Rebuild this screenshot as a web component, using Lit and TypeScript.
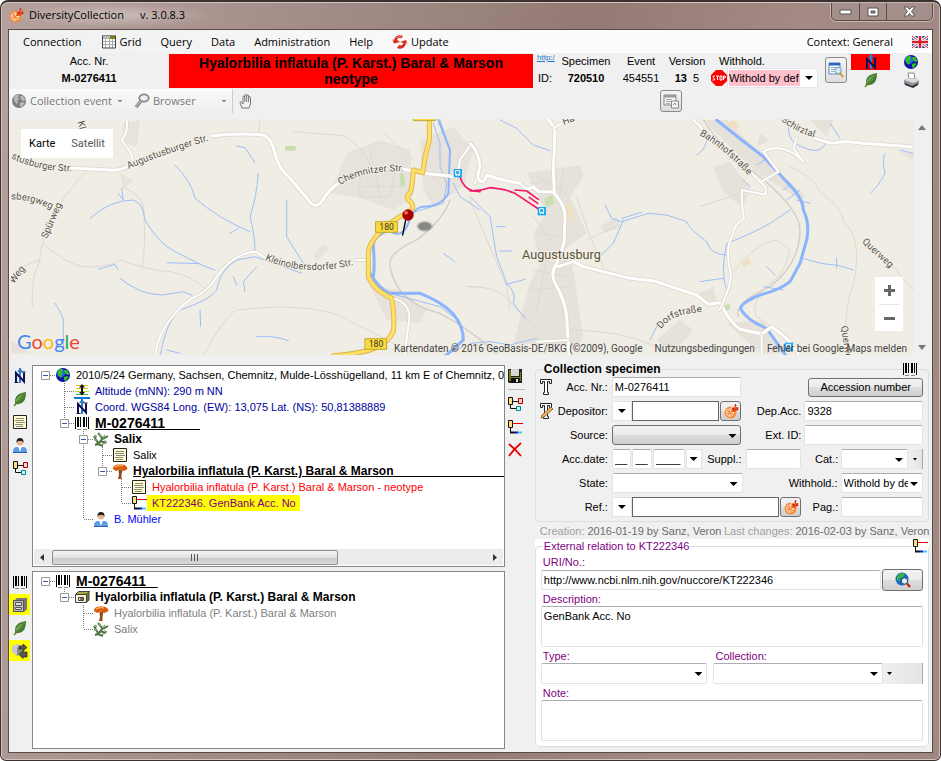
import { LitElement, html, svg, css, nothing, TemplateResult } from "lit";
import { customElement } from "lit/decorators.js";
import { classMap } from "lit/directives/class-map.js";

/* ---------- icons, all drawn on a 16 x 16 grid ---------- */
const shapes: Record<string, TemplateResult> = {
  app: svg`<path d="M8 3.500A6 6 0 1 0 13.500 9L8 9z" fill="#f58a3a"/><circle cx="7" cy="9.500" r="4.300" fill="#ffd9b8"/>
    <path d="M7 9.500L5.500 5.500M7 9.500L3.500 7M7 9.500L2.500 10.500M7 9.500L4.500 13M7 9.500L8.500 13.500M7 9.500L11 12" stroke="#f08030"/>
    <path d="M8 9L9 4l2 1 1.500-4L13 4l2.500 0-1 3-2 2z" fill="#ee5a1c"/><path d="M12 1.500l1 1.500M14 5l1 2M10 5l2 2" stroke="#c8201a" stroke-width="1.500"/>`,
  grid: svg`<path d="M1 1h14v13H1z" fill="#fff"/><path d="M1 1h8v4H1z" fill="#b8b8b8"/><path d="M9 1h6v4H9z" fill="#7d7d10"/>
    <path d="M1 7.500h14M1 10.500h14M4.500 5v9M8.500 5v9M11.500 5v9" stroke="#aaa"/><path d="M1.500 1v13h13V1" stroke="#444"/><path d="M1 1.500h14" stroke="#888"/>`,
  update: svg`<path d="M2 7C2 3 6 0 11 2L9 4.500C7 3.500 6 4 5 6L8 8 2 9.500 0 5z" fill="#d92a1c"/><path d="M14 8c0 5-4 8-9 6l2-3c2 1 4 0 4.500-2L8 8l6-2 2 5z" fill="#d92a1c"/><path d="M4 4.500C5 3 7 2.300 9 2.800" stroke="#ff9a8a" fill="none"/>`,
  flag: svg`<path d="M0 2h16v12H0z" fill="#1c3f94"/><path d="M0 2l16 12M16 2L0 14" stroke="#fff" stroke-width="3"/><path d="M0 2l16 12M16 2L0 14" stroke="#d81e2c"/>
    <path d="M8 2v12M0 8h16" stroke="#fff" stroke-width="4.500"/><path d="M8 2v12M0 8h16" stroke="#d81e2c" stroke-width="2.500"/>`,
  globe: svg`<circle cx="8" cy="8" r="7" fill="#0c10a8"/><circle cx="6" cy="6" r="4" fill="#2a62f0"/><path d="M3 4l3-2.500 2 1-1 2 1 2-2 1 1 2-1 1.500-3-3zM9 3l3 0 2.500 4-2 1-2-1-1-2zM9 10l3-1 1.500 1L11 14l-2-1z" fill="#2fc21c"/>`,
  globeGray: svg`<circle cx="8" cy="8" r="7" fill="#808080"/><path d="M3 4l3-2.500 2 1-1 2 1 2-2 1 1 2-1 1.500-3-3zM9 3l3 0 2.500 4-2 1-2-1-1-2zM9 10l3-1 1.500 1L11 14l-2-1z" fill="#b9b9b9"/>`,
  lens: svg`<ellipse cx="10" cy="5" rx="4.700" ry="3.700" fill="#eee" stroke="#8a8a8a" stroke-width="1.800"/><path d="M7 8l-5 6" stroke="#8a8a8a" stroke-width="3.500"/><path d="M7 8l-5 5" stroke="#ccc"/>`,
  hand: svg`<path d="M4 15L2 9.500 3 8.500 5 11V4c0-1.300 1.800-1.300 1.800 0V2.500c0-1.500 1.900-1.500 1.900 0V3c0-1.400 1.900-1.400 1.900 0v1.500c0-1.200 1.900-1.200 1.900 0V11l-1.500 4z" fill="#f2f2f2" stroke="#777"/><path d="M6.800 4v5M8.700 3v6M10.600 4v5" stroke="#777"/>`,
  stop: svg`<path d="M5 0h6l5 5v6l-5 5H5l-5-5V5z" fill="#f00"/><path d="M4 6H2.500Q1.500 7 2.500 8q2 .8 1 2H1.500M5 6h3M6.500 6v4M9 6h2v4H9zM12.500 10V6h1.500q1 1 0 2h-1.500" fill="none" stroke="#fff"/>`,
  finder: svg`<path d="M1 1h11v11H1z" fill="#fff" stroke="#5b86c8"/><path d="M1 1h11v2.500H1z" fill="#2b62c0"/><path d="M3 5.500h6M3 7.500h4M3 9.500h3" stroke="#8fa8c8"/><circle cx="10" cy="8.500" r="3.300" fill="#cfeaf8" stroke="#7798ad"/><path d="M12 11l3 4" stroke="#c99a2c" stroke-width="2"/>`,
  forms: svg`<path d="M1 2h12v10H1z" fill="#f4f4f4" stroke="#888"/><path d="M1 2h12v2.500H1z" fill="#999"/><path d="M3 6.500h6M3 8.500h5M3 10.500h4" stroke="#aaa"/><path d="M8.500 8h7v7h-7z" fill="#f4f4f4" stroke="#888"/><path d="M10 12l2-2 1 2" stroke="#888" fill="none"/>`,
  north: svg`<path d="M8 0v15" stroke="#2a80c8" stroke-width="2"/><path d="M5 4l3-4 3 4z" fill="#2a80c8"/><path d="M4 14V5l8 8.500V4.500" fill="none" stroke="#101058" stroke-width="2"/><path d="M2.500 14.500h4M9.500 4h4" stroke="#101058"/>`,
  leaf: svg`<path d="M14 1Q4 2 3 9l0 4q8 1 10-5 1-3 1-7z" fill="#3f7d37"/><path d="M13 2Q5 5 3 11q6-1 8-5z" fill="#6fae5c"/><path d="M13 2L2 15" stroke="#6a7b28" stroke-width="1.400"/>`,
  printer: svg`<path d="M5 1h6l1 6H6z" fill="#fff" stroke="#888"/><path d="M1 8l4-2 9 1 2 2v3l-6 3-9-3z" fill="#8f959c"/><path d="M1 8l4-2 9 1 1 2-5 2z" fill="#d8dce0"/><path d="M2 11l7 3 6-3v2l-5 3-8-3z" fill="#333"/>`,
  note: svg`<path d="M1.500 1.500h13v13h-13z" fill="#fffbd0" stroke="#222"/><path d="M4 4.500h8M3 6.500h9M4 8.500h9M3 10.500h8M4 12.500h7" stroke="#8c8a78"/>`,
  person: svg`<path d="M1 15q0-5 4-5h6q4 0 4 5z" fill="#5b9be8"/><path d="M6 9h4l-2 6z" fill="#fff"/><circle cx="8" cy="5.500" r="3" fill="#e8b088"/><path d="M4.500 6Q4 1 8 1t3.500 5L10 4H6z" fill="#222"/><path d="M1 15.500h14" stroke="#2b5fae"/>`,
  relations: svg`<path d="M6 5.500h5M3.500 8v4.500h6" fill="none" stroke="#111"/><path d="M1.500 1.500h4v7h-4z" fill="#ffe07a" stroke="#111"/><path d="M11.500 2.500h4v5h-4z" fill="#fbd0d0" stroke="#a00"/><path d="M9.500 10.500h4v4h-4z" fill="#c8fbfb" stroke="#088"/>`,
  external: svg`<path d="M6 4.500h10" stroke="#e00000"/><path d="M3.500 8v5.500H7" fill="none" stroke="#111"/><path d="M3 13.500h5" stroke="#111" stroke-width="2"/><path d="M8 13.500h3" stroke="#0018d8" stroke-width="2"/><path d="M11 13.500h4" stroke="#40c8f0" stroke-width="2"/><path d="M1.500 1.500h4v7h-4z" fill="#ffe07a" stroke="#111"/>`,
  altitude: svg`<path d="M2 2.500h12M2 5.500h12" stroke="#e8c820"/><path d="M1 8.500h14" stroke="#b0e020"/><path d="M2 11.500h12" stroke="#40b840"/><path d="M0 15h16" stroke="#0878e8" stroke-width="2"/><path d="M8 3v8" stroke="#111" stroke-width="2"/><path d="M5 4.500l3-3.500 3 3.500zM5 9l3 3.500L11 9z" fill="#111"/>`,
  barcode: svg`<path d="M1.500 2v12M14.500 2v12" stroke="#000"/><path d="M4 2v10M10 2v10" stroke="#000" stroke-width="2"/><path d="M6.500 2v10M12.500 2v10" stroke="#000"/><path d="M3 14.500h4M9 14.500h4" stroke="#888"/>`,
  twig: svg`<path d="M2 14q5-1 8-8M5 12L1 5M7 10l6 2M9 7L5 2M5 13l5 2M10 8l5-3" stroke="#4c7340" stroke-width="2" fill="none"/><path d="M2 4l2 2M1 9l3 0M6 2l2 3M12 4l-2 3M11 10l3 1M9 14l2-2" stroke="#86a878" stroke-width="1.500"/>`,
  mushroom: svg`<path d="M6.500 7h4l-1 4 0 5H6l1-4z" fill="#8c4a16"/><path d="M1 6Q1 1 8 1.500 15 1 15.500 6L12 8 8 6.500 4 8z" fill="#d85a0c"/><path d="M3 4q4-2 8-1" stroke="#ffae50" stroke-width="1.400" fill="none"/>`,
  box: svg`<path d="M12 5l3-3v9l-3 3z" fill="#777728" stroke="#444"/><path d="M1.500 5.500h11v8h-11z" fill="#f4f3d8" stroke="#444"/><path d="M1.500 5.500l3-3h11l-3 3z" fill="#a9a838" stroke="#444"/><path d="M4.500 8.500h5v3h-5z" fill="#e6e5b8" stroke="#444"/><path d="M6 10h3" stroke="#000"/>`,
  cabinet: svg`<path d="M2 4l3-3h10v11l-3 3z" fill="#777"/><path d="M1.500 3.500h10v11h-10z" fill="#bdbdbd" stroke="#555"/><path d="M3.500 5.500h6v3h-6zM3.500 10.500h6v2h-6z" fill="#ddd" stroke="#555"/>`,
  transfer: svg`<path d="M0 3l5-2 5 2v6l-5 4-5-4z" fill="#c9c9c9"/><path d="M5 5l5-2v6l-5 4z" fill="#8a8a8a"/><path d="M7 3h4V1l4 3.500L11 8V6H7zM15 9h-4V7.500L7 11.500l4 4V14h4z" fill="#555" stroke="#222" stroke-width=".7"/>`,
  save: svg`<path d="M1 1h14v14H2l-1-1z" fill="#222"/><path d="M2 2h2v11H2zM13 4h1v9h-1z" fill="#777718"/><path d="M4 1h8v7H4z" fill="#d6d6d6"/><path d="M4 10h8v5H4z" fill="#111"/><path d="M9 11h2v3H9z" fill="#ddd"/><path d="M2 9h12v1H2z" fill="#777718"/>`,
  remove: svg`<path d="M2 2q6 5 12 12M14 1Q7 7 2 14" stroke="#e80000" stroke-width="1.700" fill="none"/>`,
  typeT: svg`<path d="M2.500 .5h11v4h-2v-2h-2v11h1v2h-5v-2h1v-11h-2v2h-2z" fill="#fff" stroke="#222"/>`,
  typeEdit: svg`<path d="M2.500 .5h11v4h-2v-2h-2v11h1v2h-5v-2h1v-11h-2v2h-2z" fill="#fff" stroke="#222"/><path d="M13 4l2 2-9 8-3 1 1-3z" fill="#eab066" stroke="#7a5a28" stroke-width=".8"/>`,
  webSearch: svg`<circle cx="7" cy="7" r="6.500" fill="#1868c8"/><path d="M2 4l4-3 4 1-2 3-3 1-1 3-2-1zM8 6l4 0 1 3-4 4z" fill="#3cb83c"/><circle cx="9.500" cy="9" r="3.200" fill="#d5f2ff" stroke="#345"/><path d="M12 11.500l3 3.500" stroke="#d01818" stroke-width="2.200"/>`,
};
const icon = (name: string, size = 16) =>
  html`<svg class="icon" width=${size} height=${size} viewBox="0 0 16 16" fill="none" aria-hidden="true">${shapes[name]}</svg>`;

const base = css`
  * { box-sizing: border-box; }
  .icon { display: block; flex: none; }
  button { font: inherit; color: inherit; padding: 0; margin: 0; cursor: default; }
`;

/* ---------- map ---------- */
@customElement("site-map")
class SiteMap extends LitElement {
  static styles = [base, css`
    :host { display: flex; font: 10px/14px Roboto, sans-serif; color: #444; }
    .map { position: relative; flex: 1; min-width: 0; height: 236px; overflow: hidden; background: #f0ede5; }
    .ground { display: block; width: 100%; height: 100%; }
    .modes { position: absolute; left: 10px; top: 10px; height: 29px; display: flex; align-items: center; gap: 16px; padding: 0 8px; background: #fff; font-size: 11px; color: #565656; }
    .modes button { border: 0; background: none; }
    .modes .on { color: #000; }
    .zoom { position: absolute; right: 11px; bottom: 24px; width: 28px; background: #fff; display: flex; flex-direction: column; padding: 0 4px; }
    .zoom button { height: 27px; border: 0; background: none; display: flex; justify-content: center; align-items: center; }
    .zoom button + button { border-top: 1px solid #e3e3e3; }
    .credits { position: absolute; right: 7px; bottom: -1px; display: flex; gap: 12px; }
    .credits a { color: inherit; text-decoration: none; }
    .brand { position: absolute; left: 6px; bottom: 2px; font: 20px/24px Lato, sans-serif; }
    .b { color: #4285f4; } .r { color: #ea4335; } .y { color: #fbbc05; } .g { color: #34a853; }
    .bar { width: 16px; background: #f0f0f0; display: flex; flex-direction: column; justify-content: space-between; align-items: center; padding: 6px 0 5px; }
  `];
  render() {
    return html`
      <div class="map">
        <svg class="ground" viewBox="0 0 2709 708" preserveAspectRatio="xMidYMid slice" fill="none" stroke-linejoin="round" stroke-linecap="round" font-family="Roboto, sans-serif" font-size="29">
          <defs>
            <path id="p1" d="M0 118Q100 165 215 155"/><path id="p2" d="M353 150Q430 115 600 62"/><path id="p3" d="M988 198Q1060 150 1195 158"/>
            <path id="p4" d="M762 422Q890 480 1055 430"/><path id="p5" d="M108 360L155 250"/><path id="p6" d="M0 242Q60 240 130 275"/>
            <path id="p7" d="M2065 48Q2150 95 2230 190"/><path id="p8" d="M1950 630Q1990 575 2095 580"/><path id="p9" d="M2552 370L2645 455"/>
            <path id="p10" d="M2310 5Q2360 45 2435 62"/><path id="p11" d="M2490 622L2510 760"/><path id="p12" d="M8 495L55 435"/><path id="p13" d="M1658 18Q1700 5 1720 -15"/>
            <path id="p14" d="M200 8L210 48"/>
          </defs>
          <g transform="translate(-33 -27)">
            <g fill="#e7e3dc">
              <path d="M1040 130l100-40 90 30 10 140-60 40-110-40-80-10z"/><path d="M1260 90l100-40 60 70-30 110-90 60-30-50z"/><path d="M1110 530l90 10 80 60-20 40-100-10z"/>
              <path d="M370 40l50-10-10 80-40-10zM360 190l40 20-30 30zM940 430l30-25 20 10-40 40zM33 690l60 40H33z"/>
            </g>
            <path d="M855 108h32v14h-32zM1198 190l14 2 4 34-14 4z" fill="#c9dfaf"/>
            <path d="M270 170Q200 240 130 360l0 45q80 60 120 65 70 5 110-20 80 30 150 35 60 10 105 50M125 405q-5 60-20 80-10 50-8 105M370 230q60 30 60 60 10 120-5 185M120 450q-60 20-80 40M880 65l150 12q60 30 90 110M610 740q60-120 100-140 250-30 350 40 90 40 150 80M1080 190v70h90l20-90M1090 230h110M1110 120l30 140M1150 70l90 80M1400 530h40M780 30l-5 40" stroke="#ddd9cf" stroke-width="3"/>
            <path d="M1350 270q-20 60-100 120-90 40-80 80 20 110 150 140 80 40 170 120" stroke="#d0cdc6" stroke-width="4"/>
            <g stroke="#9dbff7" stroke-width="3">
              <path d="M270 325q60-55 130-55 30 10 35 60 40 70 90 95l80 40 40 15M365 235l5 35-15-20M525 165q50 50 60 100 70 60 165 100M710 108l25 5 30 45M775 190q-5 70-25 130 15 60 15 100M860 270v110l50 80M500 458l100 3M360 505q60 50 130 50l60-10 25 10M480 740q20-110 60-140 90-30 110-60 10-60 60-90l55-10 140 50M165 580q20 30 25 50v90M700 500l10 25M770 470l-40 45 5 30M1330 430l35 25M770 680q50-5 95 12M295 478l50-15 8 15M600 600l2 50M500 720l40 10M690 370l25-15"/>
              <path d="M1300 40l20 60v70l20 50-10 60-100 30M1320 30l30 90M1360 220l20 40 60 40M1170 550l150 40 40 30M1320 740l70-30"/>
            </g>
            <path d="M1315 30l35 90-5 130q-20 40-80 40-30 10-40 50-20 50-60 20" stroke="#8ab4fb" stroke-width="6"/>
            <path d="M1165 360q-50 20-45 50 5 60 0 90M1110 490q30 50 60 60h90q130 50 130 140l-50 45" stroke="#8ab4fb" stroke-width="9"/>
            <g>
              <path d="M380 30q5 40-15 60l25 35q20 30-10 50M1180 565q50 15 48 60l-15 115M1375 190l5-40 35-50 25 60-15 60M465 740q10-100 110-175 50-20 75-65 50-70 115-75l35 20M1070 450h35" stroke="#d9d5cb" stroke-width="10"/>
              <path d="M380 30q5 40-15 60l25 35q20 30-10 50M1180 565q50 15 48 60l-15 115M1375 190l5-40 35-50 25 60-15 60M465 740q10-100 110-175 50-20 75-65 50-70 115-75l35 20M1070 450h35" stroke="#fff" stroke-width="6"/>
              <path d="M212 174l118 6q30 2 50-10M635 78q90-10 155-3 25 10 35 55 10 45 45 75l55 65q20 30 40 5 20-35 50-55M1210 178l80 14 80 8" stroke="#d9d5cb" stroke-width="13"/>
              <path d="M212 174l118 6q30 2 50-10M635 78q90-10 155-3 25 10 35 55 10 45 45 75l55 65q20 30 40 5 20-35 50-55M1210 178l80 14 80 8" stroke="#fff" stroke-width="9"/>
            </g>
            <path d="M1288 30v60q-15 50-20 98l-28-8q-2 40-8 65-20 20 0 30 15 20-5 30-80 40-110 90-15 20-12 55v50q15 40 70 65 10 60 5 100-20 40-70 55-60 15-110 17" stroke="#d9b44a" stroke-width="15"/>
            <path d="M1288 30v60q-15 50-20 98l-28-8q-2 40-8 65-20 20 0 30 15 20-5 30-80 40-110 90-15 20-12 55v50q15 40 70 65 10 60 5 100-20 40-70 55-60 15-110 17" stroke="#ffdf66" stroke-width="10"/>
            <g font-size="26"><path d="M1128 335h64v32h-64zM1096 686h64v32h-64zM1242 12h64v20h-64z" fill="#fbda3c" stroke="#c3a72e" stroke-width="3"/>
              <text x="1138" y="360" fill="#333">180</text><text x="1106" y="711" fill="#333">180</text></g>
            <path d="M1380 200q10 35 40 43l20 2" stroke="#f01a68" stroke-width="5"/>
            <ellipse cx="1274" cy="349" rx="20" ry="12" fill="#777" opacity=".8"/><ellipse cx="1274" cy="349" rx="25" ry="17" fill="#777" opacity=".3"/><path d="M1218 325l-10 50" stroke="#000" stroke-width="4"/>
            <circle cx="1224" cy="315" r="17" fill="#a80000"/><circle cx="1218" cy="308" r="6" fill="#f06060"/>
          </g>
          <g transform="translate(1377 -27)">
            <g fill="#e6e2da">
              <path d="M170 190l160-25 10 35-40 60 50 110-70 50 30 60 30 200-20 30-190-10 50-180 30-60-20-90 40-60z"/><path d="M730 170l50-15 60 80-20 60-60-50zM700 30h70l150 150 90 80-20 10-140-90z"/>
              <path d="M390 350l50-30 15 30-50 20zM680 555l50-25 10 40-30 20zM1020 30h70l-20 50zM1290 125l40 5v25zM560 690l70-60 40 30-60 70zM770 640l110-10 60 100h-70zM870 70l30 20-40 20z"/>
            </g>
            <path d="M222 268l24-12 8 22-24 14zM760 588l18-8 4 16-14 8z" fill="#c9dfaf"/><path d="M285 285h20l10 40-30 5zM815 460l20-18 8 14-20 18zM770 40l20-10 20 20-20 10z" fill="#ede0c4"/>
            <path d="M200 200l90 50M180 220l60-10M280 180l-10 70M190 320l60 80M200 370l80 10M190 480l100 20M180 540l110-10M230 440l-30 160M320 260l40 120 40 90M350 390q60-30 90-40M0 530q100 0 130 60l70 60M300 660q150 0 260 50M690 290l120-40M780 500q70-100 140-110l40 30q-20 80-60 100-60 60-40 100l70 50M960 170q70 30 90 75 70 50 70 90 60 50 30 190-20 40-25 150M1270 470l60 70M0 270l110 260 10 70" stroke="#ddd9cf" stroke-width="3"/>
            <path d="M700 30q50 80 170 170 120 100 120 160 0 100-90 170-110 50-95 90" stroke="#d0cdc6" stroke-width="4"/>
            <g stroke="#9dbff7" stroke-width="3">
              <path d="M90 30l50 25 50 50 50 17M0 260l60 60 20 120 30 80q30 30 20 60l35 45M110 523l55-15M405 285l20 40 30 10 80-25 55 5 60 20q5 20 60 60 10 40 60 40M460 330l-30 70-35 35M455 325l60-18M770 540q-20-50 0-140 80-30 130-60l60-40M690 515l70-10M710 95q-10 30-30 40M820 210l20 20M890 470l25 25M1000 445q60 20 100 20l50 15M1100 445v30M1245 130q-10 20 0 60-20 40-45 60M955 50q0 50 40 60 40 20 60 5l20-20M1080 40l30 45M940 540l-60-10M0 700l60-5 60 10 80-20M540 690l20-40M950 270l40-30M940 240l20-15M860 165l30-20M980 270l40 10M90 423h35M80 350h25M1290 120l40 10"/>
            </g>
            <path d="M740 30l75 60 65 50 70 75q50 50 50 85 20 40 10 90l-20 70-30 55q-30 25-90 40-60 25-58 42 20 35 78 58l60 85" stroke="#8ab4fb" stroke-width="9"/>
            <g stroke="#d9d5cb" stroke-width="13"><path d="M235 30q20 20 20 40l-5 110 3 70q35 40 32 75l-3 75-22 60q-20 30-5 60 30 50 35 100l7 115M265 470l45-15 30 15 140 35 70 7 130 43 35 28 35-5q30 60 60 80l65 14 30-22q60 40 80 80M0 100q25 20 30 70-15 40 5 45 10 0 15-20 60 20 100 25 20 25 40 10l15 15h45M1035 85l50 15q40-10 90 0l150 10"/></g>
            <g stroke="#fff" stroke-width="9"><path d="M235 30q20 20 20 40l-5 110 3 70q35 40 32 75l-3 75-22 60q-20 30-5 60 30 50 35 100l7 115M265 470l45-15 30 15 140 35 70 7 130 43 35 28 35-5q30 60 60 80l65 14 30-22q60 40 80 80M0 100q25 20 30 70-15 40 5 45 10 0 15-20 60 20 100 25 20 25 40 10l15 15h45M1035 85l50 15q40-10 90 0l150 10"/></g>
            <path d="M670 30l90 90M840 185l45 45q10 30-10 22l-60-12q0 60 8 85-35 20-35 50-25 40-5 120-5 50-35 105M875 215l50-30-45-60q60-30 120 30l-30-40 10-30M250 55l25-15M200 695l95-5M875 735v-60" stroke="#d9d5cb" stroke-width="10"/>
            <path d="M670 30l90 90M840 185l45 45q10 30-10 22l-60-12q0 60 8 85-35 20-35 50-25 40-5 120-5 50-35 105M875 215l50-30-45-60q60-30 120 30l-30-40 10-30M250 55l25-15M200 695l95-5M875 735v-60" stroke="#fff" stroke-width="6"/>
            <path d="M0 243q30 0 60-10 50 5 75 17l75 50M135 240l35 3 35 25M178 262l25 18" stroke="#f01a68" stroke-width="5"/>
          </g>
          ${[[1340, 163], [1592, 277], [2333, 684]].map(([x, y]) => svg`<g transform="translate(${x - 12} ${y - 13})"><rect width="25" height="25" fill="#1aa6ee"/><path d="M7 5h11v11H7zM7 19h3M15 19h3" stroke="#fff" stroke-width="3"/></g>`)}
          <g fill="#55524a" stroke="#f4f1ea" stroke-width="6" paint-order="stroke">
            ${[["p1", "stusburger Str."], ["p2", "Augustusburger Str."], ["p3", "Chemnitzer Str."], ["p4", "Kleinolbersdorfer Str."], ["p5", "Spürweg"], ["p6", "sbergweg"], ["p7", "Bahnhofstraße"], ["p8", "Dorfstraße"], ["p9", "Querweg"], ["p10", "Schirztal"], ["p11", "Querweg"], ["p12", "Weg"], ["p13", "Ha"], ["p14", "Kl"]]
              .map(([id, name]) => svg`<text><textPath href="#${id}">${name}</textPath></text>`)}
            <text x="1533" y="419" font-size="38" fill="#5a5135">Augustusburg</text>
          </g>
        </svg>
        <div class="modes"><button class="on">Karte</button><button>Satellit</button></div>
        <div class="zoom">
          <button aria-label="Zoom in"><svg width="11" height="11" stroke="#666" stroke-width="3"><path d="M0 5.500h11M5.500 0v11"/></svg></button>
          <button aria-label="Zoom out"><svg width="11" height="11" stroke="#666" stroke-width="3"><path d="M0 5.500h11"/></svg></button>
        </div>
        <div class="brand"><span class="b">G</span><span class="r">o</span><span class="y">o</span><span class="b">g</span><span class="g">l</span><span class="r">e</span></div>
        <div class="credits"><span>Kartendaten © 2016 GeoBasis-DE/BKG (©2009), Google</span><a href="#terms">Nutzungsbedingungen</a><a href="#report">Fehler bei Google Maps melden</a></div>
      </div>
      <div class="bar"><svg width="8" height="5"><path d="M4 0l4 5H0z" fill="#777"/></svg><svg width="8" height="5"><path d="M4 5l4-5H0z" fill="#777"/></svg></div>`;
  }
}

/* ---------- tree ---------- */
/* guides: one letter for each level. " " empty, "|" line through, "t" branch, "l" last branch,
   "R" expander of a root, "T" expander with siblings below, "L" last expander */
interface Row { guides: string; icon: string; text: string; look?: string }
const guide = (g: string) => {
  const up = "|tlTL".includes(g), down = "|tT".includes(g), across = "tlRTL".includes(g), box = "RTL".includes(g);
  return html`<svg class="guide" width="19" height="16" stroke-dasharray="1 1" stroke="#777">
    ${up ? svg`<path d="M9.500 0v8"/>` : nothing}${down ? svg`<path d="M9.500 8v8"/>` : nothing}${across ? svg`<path d="M10 8.500h9"/>` : nothing}
    ${box ? svg`<g stroke-dasharray="none"><path d="M5.500 4.500h8v8h-8z" fill="#fff" stroke="#999"/><path d="M7 8.500h5" stroke="#3a58a8"/></g>` : nothing}</svg>`;
};

@customElement("item-tree")
class ItemTree extends LitElement {
  static properties = { rows: { attribute: false }, scroll: { type: Boolean } };
  declare rows: Row[];
  declare scroll: boolean;
  static styles = [base, css`
    :host { display: flex; flex-direction: column; justify-content: space-between; min-width: 0; background: #fff; border: 1px solid #828790; padding: 1px; font: 11px/16px "Liberation Sans", Arial, sans-serif; overflow: hidden; }
    .rows { list-style: none; margin: 0; padding: 0 0 0 2px; }
    .row { display: flex; height: 16px; white-space: pre; }
    .guide { flex: none; }
    .label { padding: 0 4px 0 5px; }
    .name { font-weight: bold; font-size: 12px; }
    .head { font-weight: bold; font-size: 14px; text-decoration: underline; }
    .main { font-weight: bold; font-size: 12px; text-decoration: underline; }
    .blue { color: #0000a0; } .person { color: #0000ff; } .red { color: #f00; } .gray { color: #808080; }
    .chosen { color: #800080; background: #ff0; }
    .scroll { display: flex; height: 16px; align-items: center; background: #ececec; padding: 0 6px; gap: 8px; }
    .track { flex: 1; }
    .thumb { width: 66%; height: 15px; border: 1px solid #8e8e8e; border-radius: 2px; background: linear-gradient(#f5f5f5, #e2e2e2 50%, #c8c8c8 50%, #dadada); display: flex; justify-content: center; align-items: center; }
  `];
  render() {
    return html`<ul class="rows">${this.rows.map((r) => html`<li class="row">${[...r.guides].map(guide)}${icon(r.icon)}<span class="label ${r.look ?? ""}">${r.text}</span></li>`)}</ul>
      ${this.scroll ? html`<div class="scroll"><svg width="4" height="7"><path d="M4 0v7L0 3.500z" fill="#333"/></svg>
        <div class="track"><div class="thumb"><svg width="8" height="7" stroke="#555"><path d="M.5 0v7M3.500 0v7M6.500 0v7"/></svg></div></div>
        <svg width="4" height="7"><path d="M0 0v7l4-3.500z" fill="#333"/></svg></div>` : nothing}`;
  }
}

const specimenRows: Row[] = [
  { guides: "R", icon: "globe", text: "2010/5/24 Germany, Sachsen, Chemnitz, Mulde-Lösshügelland, 11 km E of Chemnitz, 0.5 km" },
  { guides: " t", icon: "altitude", text: "Altitude (mNN): 290 m NN", look: "blue" },
  { guides: " t", icon: "north", text: "Coord. WGS84 Long. (EW): 13,075 Lat. (NS): 50,81388889", look: "blue" },
  { guides: " L", icon: "barcode", text: "M-0276411         ", look: "head" },
  { guides: "  T", icon: "twig", text: "Salix", look: "name" },
  { guides: "  |t", icon: "note", text: "Salix" },
  { guides: "  |L", icon: "mushroom", text: "Hyalorbilia inflatula (P. Karst.) Baral & Marson                                        ", look: "main" },
  { guides: "  | t", icon: "note", text: "Hyalorbilia inflatula (P. Karst.) Baral & Marson - neotype", look: "red" },
  { guides: "  | l", icon: "external", text: "KT222346. GenBank Acc. No", look: "chosen" },
  { guides: "  l", icon: "person", text: "B. Mühler", look: "person" },
];
const storageRows: Row[] = [
  { guides: "R", icon: "barcode", text: "M-0276411   ", look: "head" },
  { guides: " L", icon: "box", text: "Hyalorbilia inflatula (P. Karst.) Baral & Marson", look: "name" },
  { guides: "  t", icon: "mushroom", text: "Hyalorbilia inflatula (P. Karst.) Baral & Marson", look: "gray" },
  { guides: "  l", icon: "twig", text: "Salix", look: "gray" },
];

/* ---------- forms ---------- */
const formStyles = css`
  :host { display: block; font: 11px/14px "Liberation Sans", Arial, sans-serif; color: #000; }
  input, textarea, .sel { height: 20px; width: 0; min-width: 0; flex: 1 1 0; margin: 0; padding: 0 2px; border: 1px solid #e2e3ea; border-top-color: #abadb3; border-radius: 2px; background: #fff; font: inherit; color: #000; outline: 0; }
  textarea { display: block; width: 100%; height: 41px; padding: 2px; resize: none; }
  .sel { position: relative; display: flex; padding: 0; }
  .sel select { appearance: none; width: 100%; border: 0; background: none; font: inherit; color: #000; padding: 0 14px 0 2px; outline: 0; }
  .sel::after, .drop::after { content: ""; width: 8px; height: 4px; background: #000; clip-path: polygon(0 0, 100% 0, 50% 100%); }
  .sel::after { position: absolute; right: 4px; top: 8px; pointer-events: none; }
  .drop { height: 20px; width: 20px; flex: none; display: flex; align-items: center; justify-content: center; border: 1px solid #e2e3ea; background: #fff; }
  .sunken { background: linear-gradient(#f2f2f2, #ebebeb 50%, #dddddd 50%, #cfcfcf); border: 1px solid #707070; border-radius: 3px; }
  .box { position: relative; border: 1px solid #d5dfe5; border-radius: 4px; margin: 0; min-width: 0; }
  .flat { border: 0; width: 15px; background: linear-gradient(90deg, #f0f0f0, #e4e4e4); border-right: 1px solid #aaa; }
  .flat::after { width: 5px; height: 3px; }
`;

@customElement("specimen-form")
class SpecimenForm extends LitElement {
  static styles = [base, formStyles, css`
    .box { padding: 0 5px 4px 2px; }
    legend { margin-left: 5px; padding: 0 1px; font-weight: bold; font-size: 12px; line-height: 14px; }
    .mark { position: absolute; right: 10px; top: -15px; background: #f0f0f0; }
    .lines { display: grid; gap: 4px; padding-top: 1px; }
    .line { display: flex; align-items: center; height: 20px; }
    .lead { width: 16px; flex: none; display: flex; }
    .lab { width: 54px; flex: none; text-align: right; margin-right: 4px; }
    .lab2 { width: 57px; margin: 0 3px; flex: none; text-align: right; }
    .lab3 { width: 34px; margin: 0 3px; flex: none; text-align: right; }
    .lab4 { width: 92px; margin: 0 3px; flex: none; text-align: right; }
    .lab5 { width: 38px; margin: 0 4px 0 2px; flex: none; text-align: right; }
    .group { flex: 130 1 0; display: flex; min-width: 0; }
    .second { flex: 119 1 0; display: flex; min-width: 0; }
    .narrow { flex: 82 1 0; display: flex; min-width: 0; }
    .plain { border: 1px solid #646464; border-radius: 0; }
    .pick { width: 21px; height: 20px; flex: none; margin-left: 1px; display: flex; align-items: center; justify-content: center; }
    .wide { flex: 1; height: 19px; margin-left: 4px; }
    .date { flex: 18 1 0; margin-right: 1px; padding: 0 2px; }
    .year { flex: 34 1 0; }
    .suppl { flex: 56 1 0; display: flex; min-width: 0; }
    .refs { flex: 190 1 0; display: flex; min-width: 0; }
    .days { flex: 90 1 0; display: flex; min-width: 0; }
    .arrow { width: 16px; }
  `];
  sel(id: string, value = "", extra = "") {
    return html`<span class="sel ${extra}"><select id=${id}><option>${value}</option></select></span>`;
  }
  render() {
    return html`<fieldset class="box"><legend>Collection specimen</legend><span class="mark">${icon("barcode")}</span>
      <div class="lines">
        <div class="line"><span class="lead">${icon("typeT")}</span><label class="lab" for="acc">Acc. Nr.:</label><span class="group"><input id="acc" .value=${"M-0276411"}></span><span class="lab2"></span><span class="second"><button class="sunken wide">Accession number</button></span></div>
        <div class="line"><span class="lead">${icon("typeEdit")}</span><label class="lab" for="dep">Depositor:</label><span class="group"><button class="drop" aria-label="Depositor list"></button><input id="dep" class="plain"><button class="sunken pick" aria-label="Find depositor">${icon("app")}</button></span><label class="lab2" for="depacc">Dep.Acc.</label><span class="second"><input id="depacc" .value=${"9328"}></span></div>
        <div class="line"><span class="lead"></span><label class="lab" for="source">Source:</label><span class="group">${this.sel("source", "", "sunken")}</span><label class="lab2" for="ext">Ext. ID:</label><span class="second"><input id="ext"></span></div>
        <div class="line"><span class="lead"></span><label class="lab" for="day">Acc.date:</label><span class="days"><input id="day" class="date" .value=${"__"}><input class="date" aria-label="Month" .value=${"__"}><input class="date year" aria-label="Year" .value=${"____"}><button class="drop arrow" aria-label="Calendar"></button></span><label class="lab5" for="suppl">Suppl.:</label><span class="suppl"><input id="suppl"></span><label class="lab3" for="cat">Cat.:</label><span class="narrow">${this.sel("cat")}<button class="drop flat" aria-label="Category menu"></button></span></div>
        <div class="line"><span class="lead"></span><label class="lab" for="state">State:</label><span class="group">${this.sel("state")}</span><label class="lab4" for="withhold">Withhold.:</label><span class="narrow">${this.sel("withhold", "Withold by def")}</span></div>
        <div class="line"><span class="lead"></span><label class="lab" for="ref">Ref.:</label><span class="refs"><button class="drop" aria-label="Reference list"></button><input id="ref" class="plain"><button class="sunken pick" aria-label="Find reference">${icon("app")}</button></span><label class="lab3" for="pag">Pag.:</label><span class="narrow"><input id="pag"></span></div>
      </div></fieldset>`;
  }
}

@customElement("relation-form")
class RelationForm extends LitElement {
  static styles = [base, formStyles, css`
    :host { background: #fff; color: #800080; }
    .box { padding: 0 5px 5px; }
    legend { margin-left: 2px; padding: 0 1px; line-height: 14px; }
    .mark { position: absolute; right: 0; top: -15px; background: #fff; }
    label { display: block; padding-left: 2px; line-height: 13px; margin-top: 3px; }
    .line { display: flex; height: 22px; align-items: center; }
    .line + label { margin-top: 2px; }
    .go { width: 41px; height: 22px; flex: none; margin-left: 1px; display: flex; align-items: center; justify-content: center; }
    .cols { display: grid; grid-template-columns: 167fr 210fr; column-gap: 6px; }
    .cell { display: flex; flex-direction: column; }
    .pair { display: flex; }
    .sel { height: 21px; }
    .flat { width: 40px; height: 21px; justify-content: flex-start; padding-left: 4px; }
  `];
  firstUpdated() {
    const box = this.renderRoot.querySelector("textarea")!;
    box.focus();
    box.setSelectionRange(box.value.length, box.value.length);
  }
  render() {
    return html`<fieldset class="box"><legend>External relation to KT222346</legend><span class="mark">${icon("external")}</span>
      <label for="uri">URI/No.:</label>
      <div class="line"><input id="uri" .value=${"http://www.ncbi.nlm.nih.gov/nuccore/KT222346"}><button class="sunken go" aria-label="Open in browser">${icon("webSearch")}</button></div>
      <label for="desc">Description:</label><textarea id="desc" .value=${"GenBank Acc. No "}></textarea>
      <div class="cols">
        <div class="cell"><label for="type">Type:</label><div class="pair"><span class="sel"><select id="type"></select></span></div></div>
        <div class="cell"><label for="coll">Collection:</label><div class="pair"><span class="sel"><select id="coll"></select></span><button class="drop flat" aria-label="Collection menu"></button></div></div>
      </div>
      <label for="note">Note:</label><textarea id="note"></textarea>
    </fieldset>`;
  }
}

/* ---------- window ---------- */
const strip = (names: string[], marked: number[] = []) =>
  names.map((n, i) => html`<button class=${classMap({ tool: true, marked: marked.includes(i) })} aria-label=${n}>${icon(n)}</button>`);

@customElement("app-root")
class AppRoot extends LitElement {
  static styles = [base, css`
    :host { display: flex; flex-direction: column; min-height: 100vh; padding: 1px 7px 7px; border: 1px solid #3b3230; border-top-width: 2px; border-radius: 8px 8px 6px 6px; box-shadow: inset 0 0 0 1px #d3c3bf; box-sizing: border-box; font: 11px/14px "Liberation Sans", Arial, sans-serif; color: #000;
      background: linear-gradient(100deg, #b5a19c, #a38c87 30%, #937a75 55%, #a38a85 75%, #a08782); }
    .ui { font-family: "Open Sans", "Noto Sans", sans-serif; font-size: 11px; }
    .title { display: flex; height: 26px; align-items: flex-start; justify-content: space-between; }
    .caption { display: flex; align-items: center; gap: 5px; height: 24px; padding-right: 30px; background: radial-gradient(closest-side, #cbbdb9, transparent); }
    .version { margin-left: 11px; }
    .winbtns { display: flex; border: 1px solid #5c4a46; border-top: 0; border-radius: 0 0 5px 5px; box-shadow: 0 0 0 1px #c7b5b0; background: #a48f8a; }
    .winbtns button { width: 27px; height: 17px; border: 0; background: none; display: flex; align-items: center; justify-content: center; }
    .winbtns button + button { border-left: 1px solid #5c4a46; }
    .winbtns .close { width: 46px; }
    .client { flex: 1; display: flex; flex-direction: column; background: #f0f0f0; border: 1px solid #5a4a47; min-width: 0; }
    .menu { display: flex; align-items: center; height: 23px; background: linear-gradient(90deg, #f0f0f0, #fcfcfc 60%); padding: 0 4px 0 14px; gap: 19px; }
    .menu button { border: 0; background: none; display: flex; align-items: center; gap: 3px; white-space: nowrap; }
    .menu .right { margin-left: auto; }
    .head { display: flex; height: 36px; padding-right: 13px; }
    .acc { width: 160px; flex: none; text-align: center; display: grid; grid-template-rows: 16px 18px; align-items: center; }
    .taxon { flex: 1; min-width: 0; background: #f00; margin: 1px 0; font: bold 14px/16px "Liberation Sans", Arial, sans-serif; text-align: center; padding: 1px 8px; }
    .ids { display: grid; grid-template-columns: 24px 58px 52px 40px; grid-template-rows: 16px 18px; align-items: center; text-align: center; }
    .ids a { font-size: 8px; line-height: 8px; color: #1878c8; align-self: start; text-align: left; padding: 1px 0 0 4px; }
    .hold { width: 107px; margin-left: 4px; display: grid; grid-template-rows: 14px 20px; padding-top: 1px; }
    .hold label { padding-left: 8px; }
    .holdrow { display: flex; align-items: center; }
    .pink { position: relative; flex: 1; min-width: 0; height: 20px; border: 1px solid #e2e3ea; background: #fff; padding: 1px; display: flex; }
    .pink select { appearance: none; font: inherit; border: 0; padding: 0; width: 71px; height: 16px; background: #ffc0cb; }
    .pink::after { content: ""; position: absolute; right: 4px; top: 7px; width: 8px; height: 4px; background: #000; clip-path: polygon(0 0, 100% 0, 50% 100%); }
    .square { width: 22px; height: 26px; border: 1px solid #8a8a8a; border-radius: 3px; background: linear-gradient(#f4f4f4, #ddd); display: flex; align-items: center; justify-content: center; }
    .find { margin: 4px 4px 0 7px; }
    .flags { width: 39px; display: grid; grid-template-rows: 18px 16px; justify-items: center; padding-top: 1px; }
    .alert { background: #f00; width: 100%; height: 16px; display: flex; justify-content: center; }
    .outs { width: 16px; margin-left: 13px; display: grid; grid-template-rows: 18px 16px; padding-top: 1px; }
    .tools { display: flex; height: 24px; align-items: center; color: #777; }
    .browse { display: flex; align-items: center; height: 24px; width: 224px; padding: 0 5px 0 2px; gap: 3px; background: linear-gradient(#fafafa, #eee); border-right: 1px solid #ccc; }
    .browse .gap { margin-left: 8px; }
    .tri { width: 6px; height: 3px; background: #888; clip-path: polygon(0 0, 100% 0, 50% 100%); margin-left: 2px; }
    .end { margin-left: auto; }
    .hand { margin-left: 5px; }
    .form { height: 22px; margin-left: 406px; }
    site-map { margin: 6px 2px 0; }
    .work { flex: 1; display: grid; grid-template-columns: minmax(0, 526fr) minmax(0, 399fr); margin-top: 6px; }
    .trees { display: grid; grid-template-columns: 23px minmax(0, 1fr) 29px; grid-template-rows: 202px minmax(0, 1fr); row-gap: 4px; padding: 4px 0 3px; }
    .side { display: flex; flex-direction: column; gap: 2px; }
    .tool { width: 21px; height: 21px; border: 0; background: none; display: flex; justify-content: center; align-items: center; }
    .marked { background: #ff0; }
    .rule { height: 1px; width: 17px; margin: 1px 3px; background: #bbb; }
    .forms { display: flex; flex-direction: column; padding: 1px 3px 3px 1px; min-width: 0; }
    .meta { display: flex; gap: 3px; height: 17px; align-items: center; padding-left: 5px; color: #a0a0a0; white-space: nowrap; overflow: hidden; }
    .meta b { font-weight: normal; color: #6d6d6d; overflow: hidden; flex: 1; }
  `];
  render() {
    return html`
      <header class="title">
        <div class="caption ui">${icon("app")}<span>DiversityCollection</span><span class="version">v. 3.0.8.3</span></div>
        <div class="winbtns">
          <button aria-label="Minimize"><svg width="13" height="6"><path d="M1 1h11v4H1z" fill="#fff" stroke="#555"/></svg></button>
          <button aria-label="Maximize"><svg width="12" height="10"><path d="M1 1h10v8H1zM4 4v2h4V4z" fill="#fff" fill-rule="evenodd" stroke="#555"/></svg></button>
          <button class="close" aria-label="Close"><svg width="13" height="11"><path d="M1 1h3.500l2 2.500 2-2.500H12L8.500 5.500 12 10H8.500l-2-2.500-2 2.500H1l3.500-4.500z" fill="#fff" stroke="#555"/></svg></button>
        </div>
      </header>
      <main class="client">
        <nav class="menu ui">
          <button>Connection</button><button>${icon("grid")}Grid</button><button>Query</button><button>Data</button><button>Administration</button><button>Help</button><button>${icon("update")}Update</button>
          <button class="right">Context: General</button><button aria-label="Language">${icon("flag")}</button>
        </nav>
        <section class="head">
          <div class="acc"><span>Acc. Nr.</span><strong>M-0276411</strong></div>
          <div class="taxon">Hyalorbilia inflatula (P. Karst.) Baral &amp; Marson<br>neotype</div>
          <div class="ids"><a href="#link">http:/</a><span>Specimen</span><span>Event</span><span>Version</span><span>ID:</span><strong>720510</strong><span>454551</span><span><strong>13</strong>&nbsp; 5</span></div>
          <div class="hold"><label for="hold">Withhold.</label><div class="holdrow">${icon("stop")}<span class="pink"><select id="hold"><option>Withold by def</option></select></span></div></div>
          <button class="square find" aria-label="Search">${icon("finder")}</button>
          <div class="flags"><span class="alert">${icon("north")}</span>${icon("leaf")}</div>
          <div class="outs">${icon("globe")}${icon("printer")}</div>
        </section>
        <section class="tools ui">
          <div class="browse">${icon("globeGray")}<span>Collection event</span><i class="tri"></i><span class="gap">${icon("lens")}</span><span>Browser</span><i class="tri end"></i></div>
          <span class="hand">${icon("hand")}</span>
          <button class="square form" aria-label="Forms">${icon("forms")}</button>
        </section>
        <site-map></site-map>
        <section class="work">
          <div class="trees">
            <div class="side">${strip(["north", "leaf", "note", "person", "relations"])}</div>
            <item-tree .rows=${specimenRows} .scroll=${true}></item-tree>
            <div class="side">${strip(["save"])}<div class="rule"></div>${strip(["relations", "external", "remove"])}</div>
            <div class="side">${strip(["barcode", "cabinet", "leaf", "transfer"], [1, 3])}</div>
            <item-tree .rows=${storageRows}></item-tree>
          </div>
          <div class="forms">
            <specimen-form></specimen-form>
            <div class="meta"><span>Creation:</span><b>2016-01-19 by Sanz, Veronica</b><span>Last changes:</span><b>2016-02-03 by Sanz, Veronica</b></div>
            <relation-form></relation-form>
          </div>
        </section>
      </main>`;
  }
}
